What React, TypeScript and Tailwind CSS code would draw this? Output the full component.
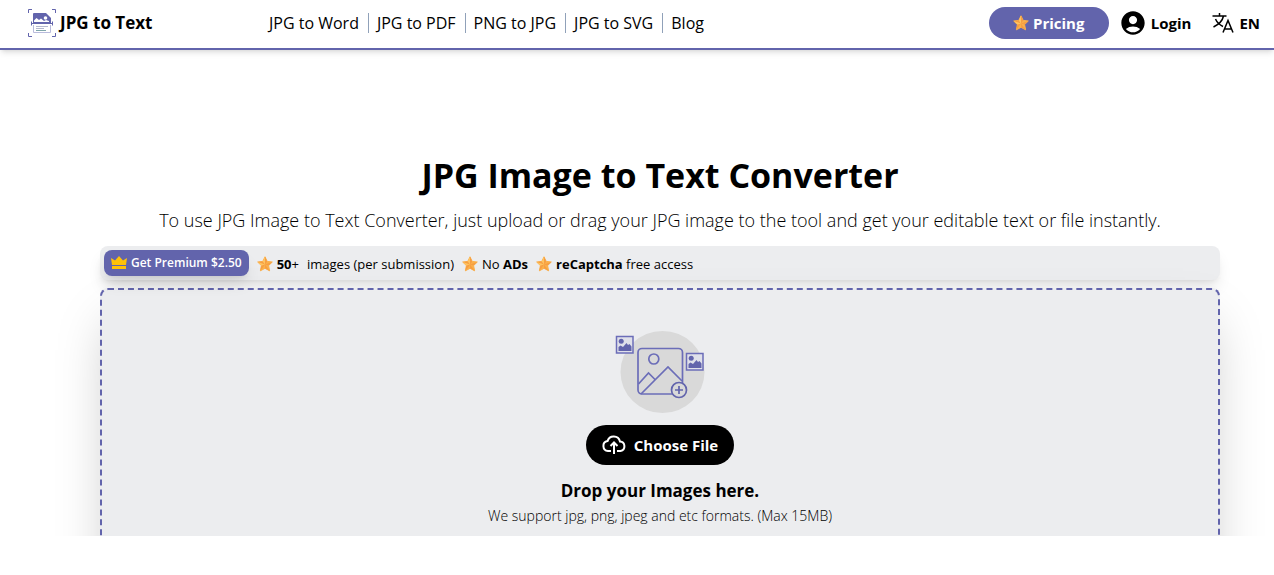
import React from 'react';
import { MdAccountCircle } from 'react-icons/md';

const navLinks = ['JPG to Word', 'JPG to PDF', 'PNG to JPG', 'JPG to SVG', 'Blog'];

const StarIcon = () => (
  <svg viewBox="0 0 16 16" className="h-4 w-4 shrink-0" aria-hidden="true">
    <path
      d="M8 .8 10.2 5.4 15.3 6 11.6 9.6 12.6 14.8 8 12.3 3.4 14.8 4.4 9.6.7 6 5.8 5.4Z"
      fill="#fbb04a"
      stroke="#fbb04a"
      strokeLinejoin="round"
    />
    <path d="M8 .8 8 8.5 10.2 5.4ZM15.3 6 8 8.5 11.6 9.6ZM12.6 14.8 8 8.5 8 12.3ZM3.4 14.8 8 8.5 4.4 9.6ZM.7 6 8 8.5 5.8 5.4Z" fill="#f28b3c" opacity=".5" />
    <path d="M8 .8 8 8.5 5.8 5.4ZM.7 6 8 8.5 4.4 9.6Z" fill="#ffc968" opacity=".8" />
  </svg>
);

const CrownIcon = () => (
  <svg viewBox="0 0 16 14" className="h-[14px] w-4 shrink-0" fill="#ffc107" aria-hidden="true">
    <path d="M0 2 4 4.5 8 0 12 4.5 16 2 15 9H1Z" />
    <path d="M1 10h14v3H1Z" />
  </svg>
);

const LogoIcon = () => (
  <svg viewBox="0 0 28 28" className="h-7 w-7 shrink-0" aria-hidden="true">
    <g fill="none" stroke="#6264ac">
      <path d="M.5 4V.5H4M24 .5h3.5V4M27.5 24v3.5H24M4 27.5H.5V24" />
    </g>
    <path d="M5 14V5q0-1 1-1h12l5 5v5Z" fill="#6264ac" />
    <path d="M6 11.500 8.500 9l2.500 2 2-1.500L16 12l2-1 3 1v1H6Z" fill="#fff" />
    <circle cx="17.500" cy="9" r="1.800" fill="#fff" />
    <path d="M3 14.500h22M3.500 12.500v4M24.500 12.500v4" stroke="#6264ac" fill="none" />
    <path d="M5.500 16v7.500h17V16" fill="none" stroke="#b9bbdc" />
    <path d="M8 17.500h12M8 19.500h8" stroke="#b5b9cf" fill="none" />
    <path d="M8 21.500h10" stroke="#7fa6aa" fill="none" />
  </svg>
);

const TranslateIcon = () => (
  <svg viewBox="0 0 24 24" className="h-6 w-6 shrink-0" fill="none" stroke="currentColor" strokeWidth="1.500" aria-hidden="true">
    <path d="M1.500 5h14M8.500 2v3M12.500 5C11.500 10 7.500 13.500 2.500 16M4.500 8c1.500 3.500 4.500 6 7.500 7.500" />
    <path d="m12 21.500 5-12 5 12M13.700 18h6.600" />
  </svg>
);

const CloudIcon = () => (
  <svg viewBox="0 0 24 20" className="h-5 w-6 shrink-0" fill="none" stroke="currentColor" strokeWidth="2" aria-hidden="true">
    <path d="M9 16H6a5 5 0 0 1-.500-9.900A6.500 6.500 0 0 1 18 6.500 4.800 4.800 0 0 1 18.500 16H15" />
    <path d="M12 19V8M8.500 11 12 7.500l3.500 3.500" />
  </svg>
);

const UploadArt = () => (
  <svg viewBox="0 0 90 84" className="h-[84px] w-[90px]" aria-hidden="true">
    <ellipse cx="47.500" cy="42" rx="42" ry="41" fill="#d9d9d9" />
    <g fill="none" stroke="#6b6db8" strokeWidth="1.700">
      <rect x="23" y="18.500" width="44.500" height="45.500" rx="4" />
      <circle cx="38.800" cy="29" r="5" />
      <path d="m23.500 54 10-11 7 7M26 64l27-27 14 14" />
    </g>
    <circle cx="64" cy="60" r="7.500" fill="#d9d9d9" stroke="#6264ac" strokeWidth="1.700" />
    <path d="M64 56v8M60 60h8" stroke="#6264ac" strokeWidth="1.700" />
    {[
      [1, 6],
      [71, 23],
    ].map(([x, y]) => (
      <g key={x} transform={`translate(${x} ${y})`}>
        <rect x=".500" y=".500" width="16.500" height="16.500" fill="#dfe0ea" stroke="#6b6db8" strokeWidth="1.500" />
        <circle cx="5.200" cy="5.200" r="2.500" fill="#6264ac" />
        <path d="M2.500 15v-4l2-1.500L7 11l3.500-4 1.500 2 1.500-1 2 2.500V15Z" fill="#6264ac" />
      </g>
    ))}
  </svg>
);

export default function App() {
  return (
    <div className="bg-white font-['Open_Sans',sans-serif] text-black">
      <header className="flex h-[50px] items-center border-b-2 border-[#6264ac] pr-[14px] pb-[2px] pl-7 shadow-md">
        <a href="#" className="flex w-[233px] shrink-0 items-center gap-1 text-[17px] font-bold">
          <LogoIcon />
          JPG to Text
        </a>
        <nav className="flex grow whitespace-nowrap">
          {navLinks.map((label) => (
            <a
              key={label}
              href="#"
              className="border-r border-slate-400 pr-[9px] pl-2 text-base leading-5 font-medium last:border-r-0"
            >
              {label}
            </a>
          ))}
        </nav>
        <div className="flex shrink-0 items-center text-[15px] font-bold">
          <button className="flex h-8 w-[120px] items-center justify-center gap-1 rounded-full bg-[#6264ac] text-white">
            <StarIcon />
            Pricing
          </button>
          <a href="#" className="ml-[10px] flex items-center gap-1">
            <MdAccountCircle className="h-7 w-7" />
            Login
          </a>
          <button className="ml-5 flex items-center gap-1">
            <TranslateIcon />
            EN
          </button>
        </div>
      </header>

      <main className="overflow-hidden pt-[100px] pr-[54px] pl-[100px]">
        <h1 className="text-center text-[34px] leading-[50px] font-bold">JPG Image to Text Converter</h1>
        <p className="mt-[6px] text-center text-lg leading-7 font-light">
          To use JPG Image to Text Converter, just upload or drag your JPG image to the tool and get your editable text
          or file instantly.
        </p>
        <div className="mt-3 flex h-[34px] items-center gap-2 rounded-lg bg-[#ecedef] px-1 text-[13px] leading-5 shadow-lg">
          <a
            href="#"
            className="flex h-[26px] items-center gap-1 rounded-lg bg-[#6264ac] px-[7px] text-xs font-semibold text-white shadow-lg"
          >
            <CrownIcon />
            Get Premium $2.50
          </a>
          <span className="flex items-center gap-1 pt-[2px]">
            <StarIcon />
            <span>
              <b>50</b>+
            </span>
            <span className="pl-1">images (per submission)</span>
          </span>
          <span className="flex items-center gap-1 pt-[2px]">
            <StarIcon />
            <span>
              No <b>ADs</b>
            </span>
          </span>
          <span className="flex items-center gap-1 pt-[2px]">
            <StarIcon />
            <span>
              <b>reCaptcha</b> free access
            </span>
          </span>
        </div>
        <section className="mt-2 -mb-20 flex flex-col items-center rounded-lg border-2 border-dashed border-[#6264ac] bg-[#ecedef] pt-10 pb-[88px] shadow-2xl">
          <UploadArt />
          <button className="mt-[11px] flex h-10 items-center gap-2 rounded-full bg-black px-4 text-[15px] font-bold text-white">
            <CloudIcon />
            Choose File
          </button>
          <h2 className="mt-3 text-[17px] leading-7 font-bold">Drop your Images here.</h2>
          <p className="text-sm leading-[21px] font-light">We support jpg, png, jpeg and etc formats. (Max 15MB)</p>
        </section>
      </main>
    </div>
  );
}
